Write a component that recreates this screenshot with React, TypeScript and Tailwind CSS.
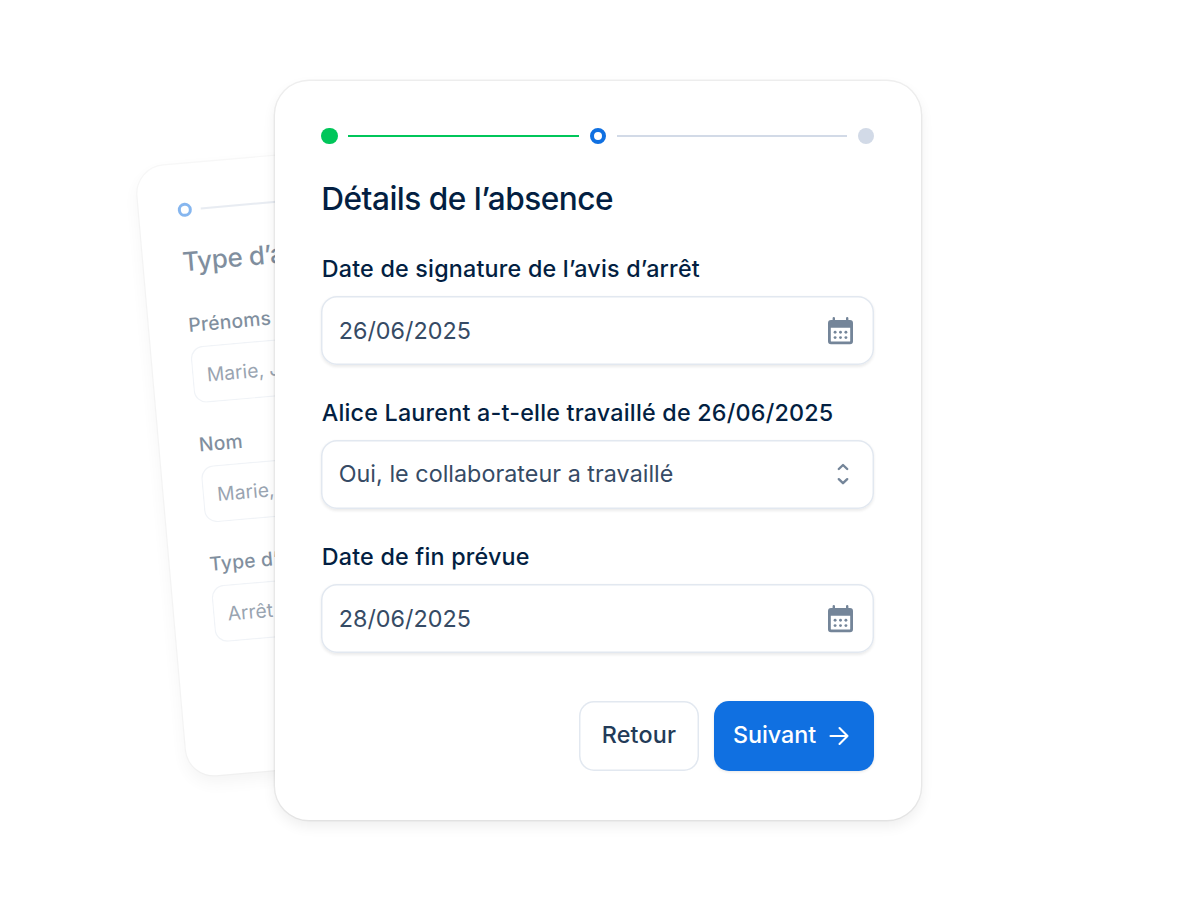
import type { ReactNode } from "react"
import clsx from "clsx"

type StepState = "done" | "current" | "todo"

function Dot({ state }: { state: StepState }) {
  return (
    <span
      className={clsx(
        "size-[16.5px] shrink-0 rounded-full",
        state === "done" && "bg-[#00c65a]",
        state === "current" && "border-[4px] border-[#1070e1] bg-white",
        state === "todo" && "bg-[#d2dae7]"
      )}
    />
  )
}

function Stepper() {
  return (
    <div className="flex h-[17px] items-center gap-[10.5px]">
      <Dot state="done" />
      <span className="h-[2px] flex-1 bg-[#00c65a]" />
      <Dot state="current" />
      <span className="h-[2px] flex-1 bg-[#d2dae7]" />
      <Dot state="todo" />
    </div>
  )
}

function CalendarIcon() {
  return (
    <svg width="25" height="28" viewBox="0 0 25 28" fill="#748599" className="mt-px">
      <path
        fillRule="evenodd"
        d="M4.6 1.2a1.2 1.2 0 0 1 2.4 0V3h11V1.2a1.2 1.2 0 0 1 2.4 0V3H22a3 3 0 0 1 3 3v18.2a3 3 0 0 1-3 3H3a3 3 0 0 1-3-3V6a3 3 0 0 1 3-3h1.6V1.2ZM2.8 10.8v13.1c0 .4.3.7.7.7h18c.4 0 .7-.3.7-.7V10.8H2.8Z"
      />
      {[15.2, 20.6].map((cy) =>
        [7.1, 12.5, 17.9].map((cx) => <circle key={`${cx}-${cy}`} cx={cx} cy={cy} r="1.45" />)
      )}
    </svg>
  )
}

function SelectIcon() {
  return (
    <svg
      width="12"
      height="22"
      viewBox="0 0 12 22"
      fill="none"
      stroke="#748599"
      strokeWidth="2.4"
      strokeLinecap="round"
      strokeLinejoin="round"
    >
      <path d="M1.8 6 6 2l4.2 4M1.8 16.2 6 20.2l4.2-4" />
    </svg>
  )
}

interface FieldProps {
  label: string
  value: string
  valueClass?: string
  icon: ReactNode
}

function Field({ label, value, valueClass, icon }: FieldProps) {
  return (
    <div>
      <p className="h-8 pl-[0.5px] text-[23.3px] leading-8 font-medium tracking-[0.21px] whitespace-nowrap text-[#031f42]">
        {label}
      </p>
      <div className="mt-[11px] flex h-[69px] items-center justify-between rounded-[16px] bg-white pr-[21px] pl-[17.5px] shadow-[inset_0_0_0_1.5px_#e2e8f0,0_1.5px_3px_rgba(0,0,0,0.08)]">
        <span className={clsx("text-[23.3px] tracking-[0.04px] whitespace-nowrap text-[#364b65]", valueClass)}>
          {value}
        </span>
        {icon}
      </div>
    </div>
  )
}

function BackField({ label, value }: { label: string; value: string }) {
  return (
    <div>
      <p className="h-6 pl-[0.5px] text-[19.3px] leading-6 font-medium tracking-[0.2px] text-[#031f42]">{label}</p>
      <div className="mt-[10px] flex h-[57px] items-center rounded-[13px] bg-white pt-[2px] pl-[14.5px] shadow-[inset_0_0_0_1.2px_#e2e8f0]">
        <span className="text-[19.3px] text-[#364b65]">{value}</span>
      </div>
    </div>
  )
}

function PreviousStepCard() {
  return (
    <div className="absolute top-[168px] left-[135px] h-[612px] w-[536px] origin-top-left rotate-[-5deg] rounded-[28px] bg-white px-[39px] pt-[39px] opacity-50 shadow-[0_0_0_1.2px_rgba(0,0,0,0.05),0_7px_14px_rgba(0,0,0,0.08)]">
      <div className="flex h-[14px] items-center gap-[9px]">
        <span className="size-[14px] rounded-full border-[3.5px] border-[#1070e1]" />
        <span className="h-[1.5px] w-[190px] bg-[#d2dae7]" />
      </div>
      <h2 className="mt-[29px] h-8 text-[26px] leading-8 font-medium tracking-[-0.4px] text-[#031f42]">
        Type d’arrêt
      </h2>
      <div className="mt-[35px] flex flex-col gap-[29px]">
        <BackField label="Prénoms" value="Marie, Jo" />
        <BackField label="Nom" value="Marie, Jo" />
        <BackField label="Type d’arrêt" value="Arrêt" />
      </div>
    </div>
  )
}

export default function App() {
  return (
    <main className="relative h-[898px] w-[1194px] overflow-hidden bg-white pt-[81px] pl-[275px] font-['Inter','Liberation_Sans',sans-serif] antialiased">
      <PreviousStepCard />
      <section className="relative h-[739px] w-[646px] rounded-[34px] bg-white pt-[46.5px] pr-[46.6px] pl-[46.2px] shadow-[0_0_0_1.4px_rgba(0,0,0,0.06),0_6px_14px_rgba(0,0,0,0.07)]">
        <Stepper />
        <h1 className="mt-[34px] h-10 text-[31.6px] leading-10 font-medium tracking-[-0.5px] whitespace-nowrap text-[#031f42]">
          Détails de l’absence
        </h1>
        <div className="mt-[34px] flex flex-col gap-8">
          <Field
            label="Date de signature de l’avis d’arrêt"
            value="26/06/2025"
            valueClass="pt-[2px]"
            icon={<CalendarIcon />}
          />
          <Field
            label="Alice Laurent a-t-elle travaillé de 26/06/2025"
            value="Oui, le collaborateur a travaillé"
            icon={
              <span className="pr-[4px]">
                <SelectIcon />
              </span>
            }
          />
          <Field
            label="Date de fin prévue"
            value="28/06/2025"
            valueClass="pt-[2px]"
            icon={<CalendarIcon />}
          />
        </div>
        <div className="mt-12 flex justify-end gap-[15px]">
          <button className="h-[70px] w-[120px] rounded-[15px] bg-white text-[23.3px] font-medium tracking-[0.2px] text-[#233b58] shadow-[inset_0_0_0_1.5px_#e2e8f0]">
            Retour
          </button>
          <button className="flex h-[70px] w-[160.5px] items-center gap-[13px] rounded-[15px] bg-[#1070e1] pl-[19px] text-[23.3px] font-medium text-white shadow-[0_1px_3px_rgba(0,0,0,0.1)]">
            Suivant
            <svg
              width="20"
              height="20"
              viewBox="0 0 20 20"
              fill="none"
              stroke="currentColor"
              strokeWidth="2.1"
              strokeLinecap="round"
              strokeLinejoin="round"
            >
              <path d="M1.5 10h17M10.5 2l8 8-8 8" />
            </svg>
          </button>
        </div>
      </section>
    </main>
  )
}
